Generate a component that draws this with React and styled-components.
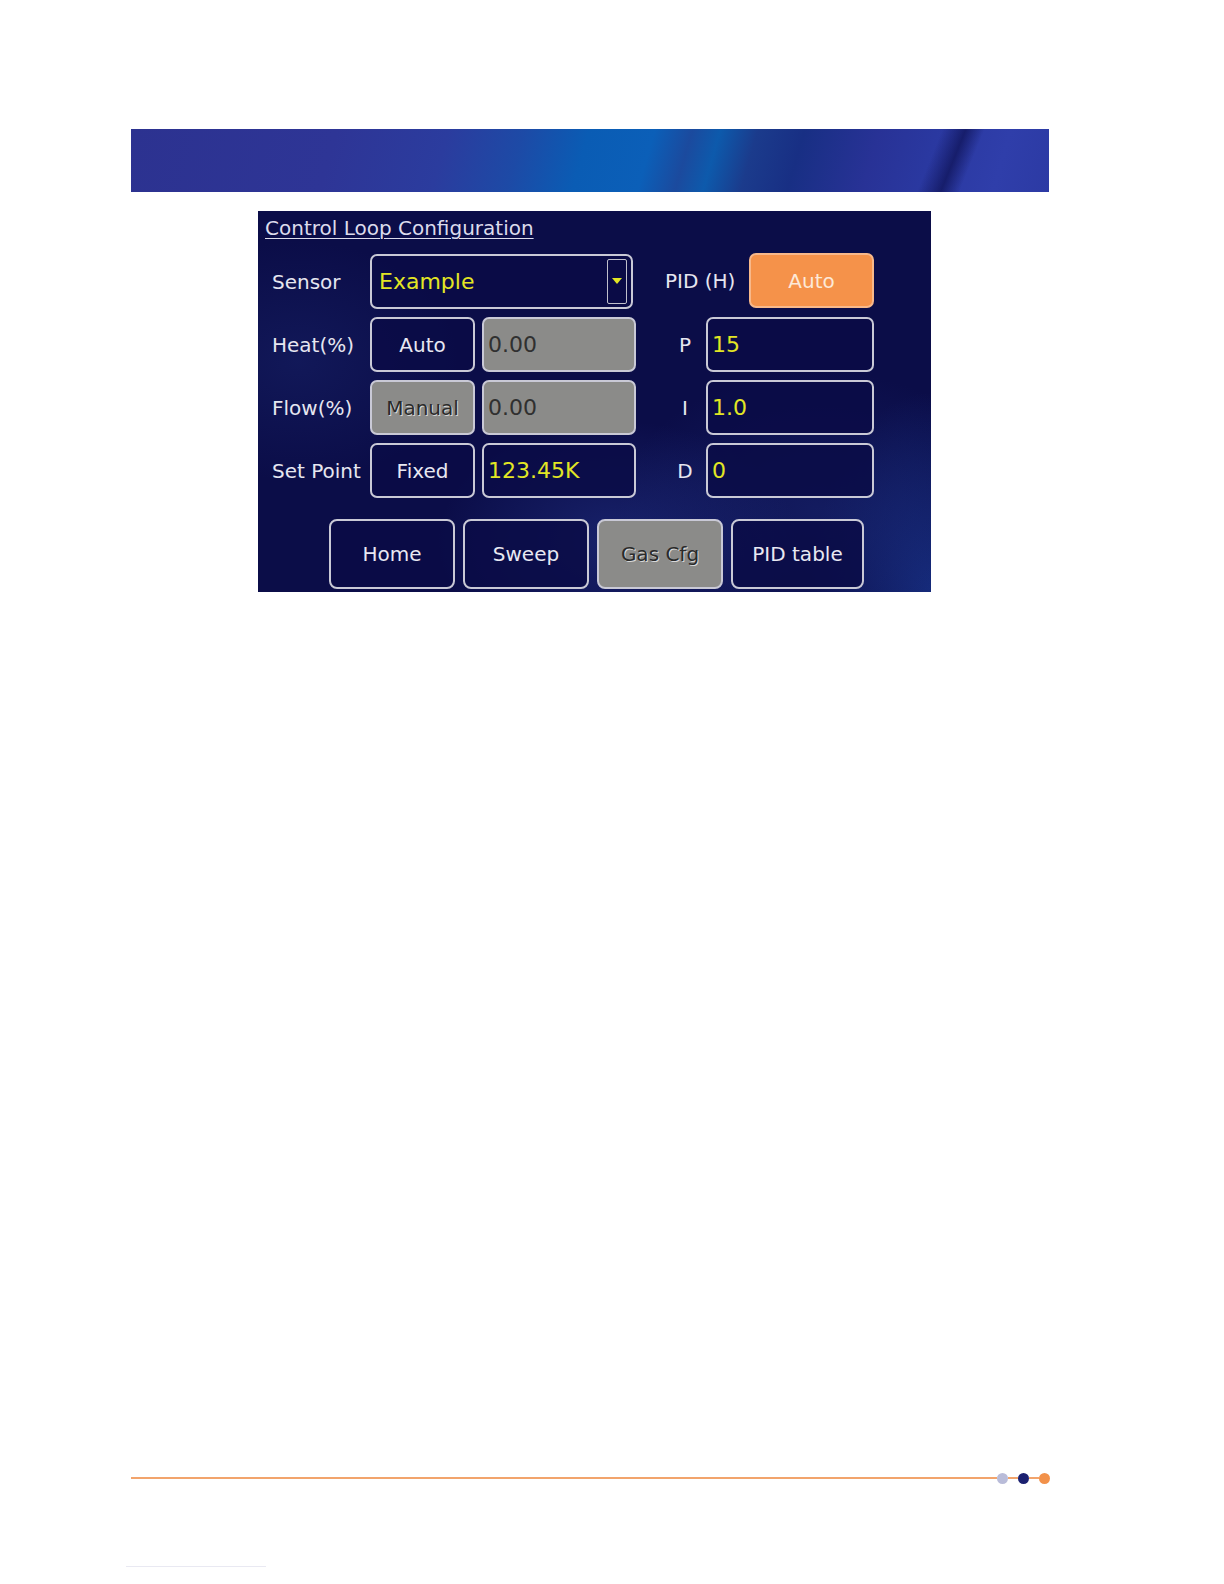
import React from 'react'
import styled, { createGlobalStyle } from 'styled-components'

const GlobalStyle = createGlobalStyle`
  html, body {
    margin: 0;
    padding: 0;
    background: #ffffff;
    overflow: hidden;
  }
  * {
    box-sizing: border-box;
  }
`

const Page = styled.div`
  width: 100%;
  height: 1584px;
  padding: 129px 0 17px 0;
  display: flex;
  flex-direction: column;
  overflow: hidden;
  font-family: "DejaVu Sans", Verdana, sans-serif;
`

const Band = styled.div`
  margin-left: 131px;
  width: 918px;
  height: 63px;
  background:
    linear-gradient(112deg,
      rgba(0,0,0,0) 0%, rgba(0,0,0,0) 86%, rgba(8,10,70,0.6) 88.5%, rgba(0,0,0,0) 90.5%,
      rgba(0,0,0,0) 100%),
    linear-gradient(106deg,
      #2c3290 0%, #2e3596 22%, #2b3c9e 34%, #1d4aa6 42%, #0a5cb4 49%,
      #0b5fb8 56%, #1b4a9e 60%, #0d5aac 63%, #1b3b8c 67%, #182f84 72%,
      #283296 80%, #2a38a0 86%, #2f3eaa 94%, #2c3aa4 100%);
`

const Screen = styled.div`
  margin: 19px 0 0 258px;
  width: 673px;
  height: 381px;
  padding: 5px 0 0 7px;
  background:
    radial-gradient(ellipse 180px 120px at 360px 330px, rgba(40,60,150,0.45), rgba(0,0,0,0)),
    radial-gradient(ellipse 200px 140px at 560px 300px, rgba(35,55,140,0.35), rgba(0,0,0,0)),
    radial-gradient(ellipse 120px 200px at 673px 381px, rgba(30,70,170,0.5), rgba(0,0,0,0)),
    radial-gradient(ellipse 160px 120px at 40px 150px, rgba(30,45,120,0.35), rgba(0,0,0,0)),
    #0b0d48;
  display: flex;
  flex-direction: column;
`

const Title = styled.div`
  color: #dcdcec;
  font-size: 20px;
  line-height: 24px;
  text-decoration: underline;
  text-underline-offset: 3px;
  text-decoration-thickness: 1px;
`

const Grid = styled.div`
  margin: 14px 0 0 7px;
  display: grid;
  grid-template-columns: 91px 105px 154px 56px 168px;
  grid-auto-rows: 55px;
  column-gap: 7px;
  row-gap: 8px;
`

const Label = styled.div`
  display: flex;
  align-items: center;
  color: #e6e6f0;
  font-size: 20px;
  white-space: nowrap;
`

const CoefLabel = styled(Label)`
  justify-content: center;
  padding-left: 28px;
`

const Box = styled.div`
  border: 2px solid #c9c9d6;
  border-radius: 7px;
  display: flex;
  align-items: center;
  background: ${p => (p.$grey ? '#8b8b89' : p.$orange ? '#f5924a' : 'rgba(10,12,70,0.85)')};
  border-color: ${p => (p.$orange ? '#f8b88a' : '#c9c9d6')};
`

const Button = styled(Box)`
  justify-content: center;
  font-size: 20px;
  color: ${p => (p.$grey ? '#2a2a2a' : p.$orange ? '#fde9d8' : '#e8e8f2')};
  text-shadow: ${p => (p.$grey ? '1px 1px 0 #d8d8d8' : 'none')};
`

const Field = styled(Box)`
  padding-left: 4px;
  font-size: 22px;
  color: ${p => (p.$grey ? '#303030' : '#e2e624')};
`

const Select = styled(Field)`
  grid-column: 2 / span 2;
  margin-right: 3px;
  padding-left: 7px;
  padding-right: 4px;
  justify-content: space-between;
`

const Arrow = styled.div`
  width: 20px;
  height: 45px;
  border: 1.5px solid #c0c0cc;
  border-radius: 2px;
  display: flex;
  align-items: center;
  justify-content: center;
`

const Pid = styled.div`
  grid-column: 4 / span 2;
  display: flex;
  align-items: stretch;
  justify-content: space-between;
  padding-left: 22px;
  margin-top: -1px;
  margin-bottom: 1px;
`

const PidButton = styled(Button)`
  width: 125px;
`

const NavRow = styled.div`
  margin: 21px 0 0 64px;
  display: flex;
  gap: 8px;
`

const NavButton = styled(Button)`
  width: ${p => p.$w || 126}px;
  height: 70px;
  border-radius: 8px;
`

const Footer = styled.div`
  margin: auto 0 0 131px;
  width: 919px;
  height: 12px;
  display: flex;
  align-items: center;
`

const Line = styled.div`
  flex: 1;
  height: 2px;
  background: #f2a46c;
`

const Seg = styled.div`
  width: 10px;
  height: 2px;
  background: #f2a46c;
`

const Dot = styled.div`
  width: 11px;
  height: 11px;
  border-radius: 50%;
  background: ${p => p.$c};
`

const BottomRule = styled.div`
  margin: 82px 0 0 126px;
  width: 140px;
  height: 1px;
  background: #e9e9f2;
`

const DropTriangle = () => (
  <svg width="10" height="7" viewBox="0 0 10 7">
    <polygon points="0,0 10,0 5,6" fill="#e2e624" />
  </svg>
)

const App = () => {
  return (
    <Page>
      <GlobalStyle />
      <Band />
      <Screen>
        <Title>Control Loop Configuration</Title>
        <Grid>
          <Label>Sensor</Label>
          <Select>
            Example
            <Arrow><DropTriangle /></Arrow>
          </Select>
          <Pid>
            <Label>PID (H)</Label>
            <PidButton $orange>Auto</PidButton>
          </Pid>

          <Label>Heat(%)</Label>
          <Button>Auto</Button>
          <Field $grey>0.00</Field>
          <CoefLabel>P</CoefLabel>
          <Field>15</Field>

          <Label>Flow(%)</Label>
          <Button $grey>Manual</Button>
          <Field $grey>0.00</Field>
          <CoefLabel>I</CoefLabel>
          <Field>1.0</Field>

          <Label>Set Point</Label>
          <Button>Fixed</Button>
          <Field>123.45K</Field>
          <CoefLabel>D</CoefLabel>
          <Field>0</Field>
        </Grid>
        <NavRow>
          <NavButton>Home</NavButton>
          <NavButton>Sweep</NavButton>
          <NavButton $grey>Gas Cfg</NavButton>
          <NavButton $w={133}>PID table</NavButton>
        </NavRow>
      </Screen>
      <Footer>
        <Line />
        <Dot $c="#b9bcd9" />
        <Seg />
        <Dot $c="#1b2070" />
        <Seg />
        <Dot $c="#f2914a" />
      </Footer>
      <BottomRule />
    </Page>
  )
}

export default App
